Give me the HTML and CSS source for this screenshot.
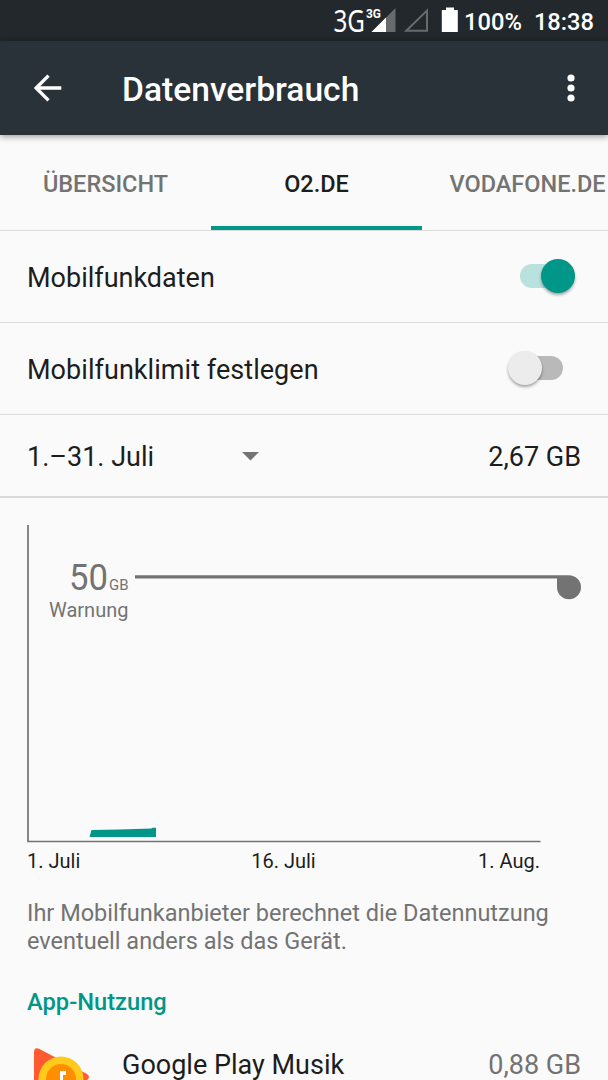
FILE: index.html
```
<!DOCTYPE html>
<html lang="de">
<head>
  <meta charset="UTF-8">
  <meta name="viewport" content="width=device-width, initial-scale=1.0">
  <title>Datenverbrauch</title>
  <link rel="stylesheet" href="styles.css">
</head>
<body>
  <div class="screen">
    <!-- Status bar -->
    <div class="status-bar">
      <svg class="status-icons" width="126" height="41" viewBox="0 0 126 41">
        <text class="network" x="0.500" y="31.5" textLength="31.500" lengthAdjust="spacingAndGlyphs">3G</text>
        <path d="M62.5 8V32H38.5z" fill="#686b6c"/>
        <path d="M53 17.5V32H38.5z" fill="#fff"/>
        <text class="network-small" x="33" y="18" textLength="15" lengthAdjust="spacingAndGlyphs">3G</text>
        <path d="M94 10.5V30.7H73.3z" fill="none" stroke="#686b6c" stroke-width="2"/>
        <path d="M113 7.5h8v2.5h3.8v22h-16V10h4.2z" fill="#fff"/>
      </svg>
      <span class="battery">100%</span>
      <span class="clock">18:38</span>
    </div>

    <!-- Toolbar -->
    <header class="toolbar">
      <svg class="back" width="28" height="28" viewBox="0 0 28 28">
        <path d="M27.3 14H2.5M14.5 1.6L2.2 14l12.3 12.4" fill="none" stroke="#fff" stroke-width="3.3"/>
      </svg>
      <h1>Datenverbrauch</h1>
      <svg class="more" width="8" height="28" viewBox="0 0 8 28">
        <g fill="#fff">
          <circle cx="4" cy="4" r="3.6"/>
          <circle cx="4" cy="14" r="3.6"/>
          <circle cx="4" cy="24" r="3.6"/>
        </g>
      </svg>
    </header>

    <!-- Tabs -->
    <nav class="tabs">
      <div class="tab">ÜBERSICHT</div>
      <div class="tab active">O2.DE</div>
      <div class="tab">VODAFONE.DE</div>
    </nav>

    <!-- Settings -->
    <div class="row">
      <span class="label">Mobilfunkdaten</span>
      <div class="switch on"><div class="thumb"></div></div>
    </div>
    <div class="row">
      <span class="label wide">Mobilfunklimit festlegen</span>
      <div class="switch"><div class="thumb"></div></div>
    </div>
    <div class="row cycle">
      <span class="label period">1.–31. Juli</span>
      <svg class="dropdown" width="17" height="9" viewBox="0 0 17 9">
        <path d="M0 0h17L8.5 8.5z" fill="#737373"/>
      </svg>
      <span class="label total">2,67 GB</span>
    </div>

    <!-- Usage chart -->
    <svg class="chart" width="608" height="345" viewBox="0 0 608 345">
      <path d="M28 27v316.500h512.500" fill="none" stroke="#737373" stroke-width="1.7"/>
      <path d="M89.500 339l2-7 28-.5 32-1 1-.7h3.500v9.200z" fill="#009688"/>
      <path d="M135 77.300H569a12 12 0 1 1-12 12V80.500H135z" fill="#737373"/>
      <text class="limit" x="69" y="92" textLength="39" lengthAdjust="spacingAndGlyphs">50</text>
      <text class="limit-unit" x="109" y="92" textLength="19.500" lengthAdjust="spacingAndGlyphs">GB</text>
      <text class="limit-name" x="49" y="118.500" textLength="79.500" lengthAdjust="spacingAndGlyphs">Warnung</text>
    </svg>
    <div class="chart-dates">
      <span>1. Juli</span>
      <span>16. Juli</span>
      <span>1. Aug.</span>
    </div>

    <p class="disclaimer">Ihr Mobilfunkanbieter berechnet die Datennutzung eventuell anders als das Gerät.</p>

    <!-- App list -->
    <h2>App-Nutzung</h2>
    <div class="app">
      <svg class="app-icon" width="63" height="61" viewBox="0 0 63 61">
        <path d="M7 7.500Q7 1.500 12.500 4L60 29q4 3 0 6L12.500 59Q7 61 7 56z" fill="#ff5a30"/>
        <circle cx="34" cy="34" r="22.500" fill="#ffca1c"/>
        <circle cx="34" cy="34" r="15" fill="#ff8f00"/>
        <path d="M33 26h6v4h-3v9.500a4 4 0 1 1-3-4z" fill="#fff"/>
      </svg>
      <span class="app-name">Google Play Musik</span>
      <span class="app-usage">0,88 GB</span>
    </div>
  </div>
</body>
</html>
```
FILE: styles.css
```
/* General */
* {
  box-sizing: border-box;
}

body {
  margin: 0;
  background-color: #fafafa;
  font-family: Roboto, sans-serif;
  color: #1d1d1d;
  overflow: hidden;
}

.screen {
  width: 608px;
  height: 1080px;
  overflow: hidden;
}

/* Status bar */
.status-bar {
  display: flex;
  justify-content: flex-end;
  align-items: center;
  height: 41px;
  padding-right: 14px;
  background-color: #22282b;
  color: #fff;
  font-size: 23.700px;
  line-height: 28px;
  font-weight: 500;
}

.battery {
  margin-left: 5px;
  padding-top: 2px;
}

.clock {
  margin-left: 12px;
  padding-top: 2px;
}

.network {
  font-family: "Noto Sans", sans-serif;
  font-size: 30px;
  font-weight: 400;
  fill: #fff;
}

.network-small {
  font-size: 13.500px;
  font-weight: 700;
  fill: #fff;
}

/* Toolbar */
.toolbar {
  position: relative;
  display: flex;
  align-items: center;
  height: 94px;
  padding: 0 33px 0 34px;
  background-color: #283238;
  color: #fff;
  box-shadow: 0 1px 7px rgba(0, 0, 0, 0.45);
}

.toolbar h1 {
  flex: 1;
  margin: 4px 0 0 60px;
  font-size: 33.600px;
  line-height: 38px;
  font-weight: 500;
}

/* Tabs */
.tabs {
  display: flex;
  height: 96px;
  border-bottom: 1px solid #dadada;
}

.tab {
  flex: 0 0 211px;
  padding-top: 4px;
  border-bottom: 4px solid transparent;
  font-size: 23.500px;
  font-weight: 500;
  line-height: 91px;
  height: 95px;
  text-align: center;
  color: #737373;
}

.tab.active {
  color: #1d1d1d;
  border-bottom-color: #009688;
}

/* Settings rows */
.row {
  display: flex;
  align-items: center;
  justify-content: space-between;
  height: 92px;
  padding: 0 27px;
  border-bottom: 1px solid #dadada;
}

.label {
  padding-top: 2px;
  font-size: 27px;
}

.label.wide {
  letter-spacing: 0.05px;
}

.cycle {
  height: 83px;
  border-bottom-width: 2px;
}

.period {
  width: 214.500px;
}

.dropdown {
  margin-top: 2px;
}

.total {
  flex: 1;
  text-align: right;
}

/* Switch */
.switch {
  display: flex;
  align-items: center;
  width: 42px;
  height: 24px;
  margin: 0 18.500px 2px 0;
  border-radius: 12px;
  background-color: #b9b9b9;
}

.thumb {
  flex: none;
  width: 34px;
  height: 34px;
  margin-left: -13px;
  border-radius: 50%;
  background-color: #ececec;
  box-shadow: 0 2px 3px rgba(0, 0, 0, 0.35);
}

.switch.on {
  margin-right: 19px;
  background-color: #b9e1dd;
}

.switch.on .thumb {
  margin-left: 21px;
  background-color: #009688;
}

/* Chart */
.chart {
  display: block;
}

.chart text {
  fill: #737373;
}

.limit {
  font-size: 37px;
}

.limit-unit {
  font-size: 15px;
}

.limit-name {
  font-size: 20px;
}

.chart-dates {
  display: grid;
  grid-template-columns: 1fr auto 1fr;
  width: 513px;
  margin-left: 27px;
  padding-top: 6px;
  font-size: 20px;
  line-height: 24px;
}

.chart-dates span:last-child {
  text-align: right;
}

/* Text below the chart */
.disclaimer {
  margin: 26px 27px 0;
  font-size: 23.500px;
  line-height: 28px;
  color: #737373;
}

h2 {
  margin: 33px 27px 0;
  font-size: 23.700px;
  line-height: 28px;
  font-weight: 500;
  color: #009688;
}

/* App list */
.app {
  display: flex;
  align-items: flex-start;
  height: 70px;
  margin-top: 29px;
  padding: 0 27px;
}

.app-name {
  flex: 1;
  margin-left: 32px;
  padding-top: 4px;
  font-size: 27px;
  line-height: 32px;
}

.app-usage {
  padding-top: 4px;
  font-size: 27px;
  line-height: 32px;
  color: #737373;
}
```
